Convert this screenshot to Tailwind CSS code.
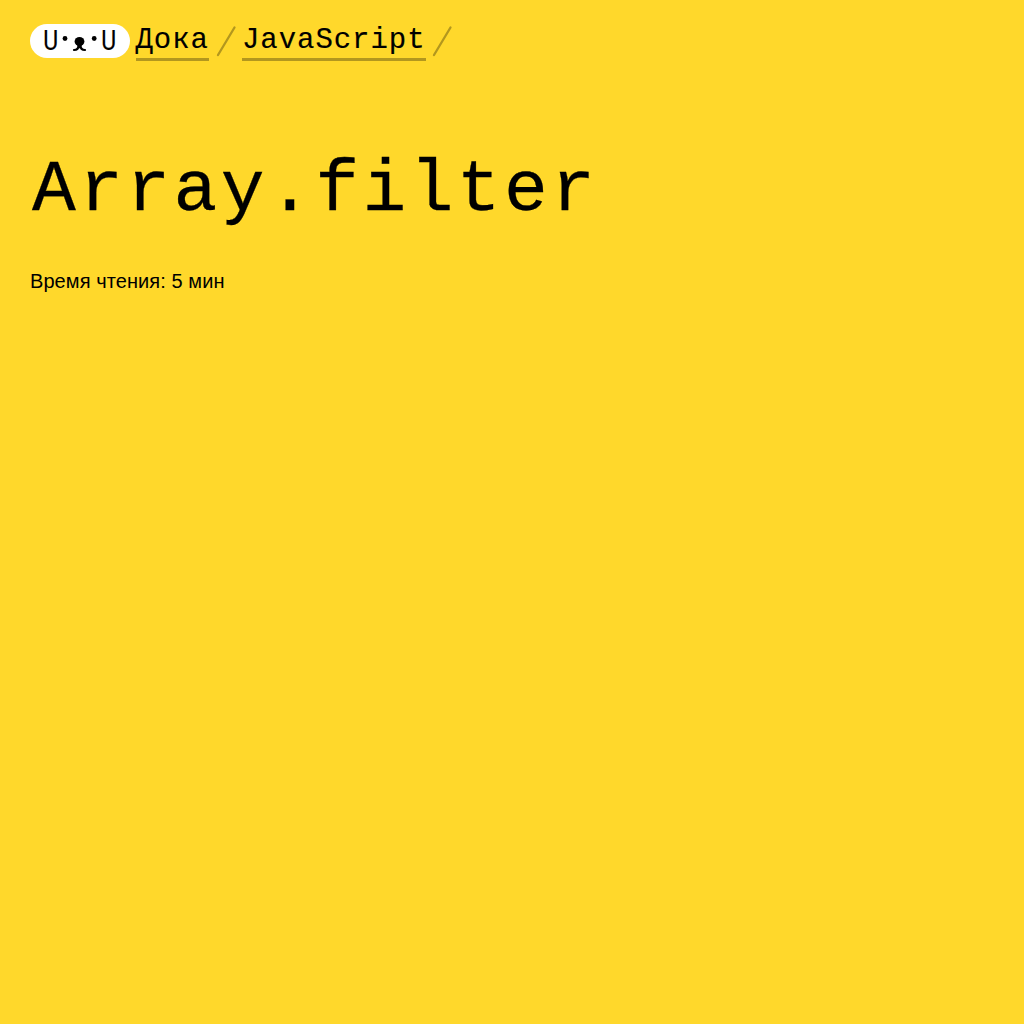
<!DOCTYPE html>
<html lang="ru">
<head>
<meta charset="utf-8">
<title>Array.filter</title>
<script src="https://cdn.jsdelivr.net/npm/@tailwindcss/browser@4"></script>
</head>
<body class="min-h-screen bg-[#ffd82b] text-black px-[30px] pt-6">
<header class="flex h-[38px] items-start font-['Liberation_Mono',monospace] text-[29px] leading-[34px]">
  <a class="mr-[5.5px] flex h-[34px] w-[100px] shrink-0 items-center justify-center rounded-full bg-white pr-[1.5px] font-['Roboto',sans-serif] text-[27px] leading-[34px]">
    <span class="w-[17px] scale-x-85 text-center [-webkit-text-stroke:0.2px_black]">U</span>
    <svg class="h-[34px] w-[41px]" viewBox="0 0 41 34"><circle cx="6" cy="14.500" r="2.400"/><circle cx="35.200" cy="14.500" r="2.400"/><ellipse cx="20.500" cy="17.500" rx="4.900" ry="4.500"/><path d="M18 19h5l-1 4-1.500 1.500L19 23z"/><path d="M19.500 21.500c0 3-1.500 4.500-4.500 4.500M21.500 21.500c0 3 1.500 4.500 4.500 4.500" fill="none" stroke="#000" stroke-width="2.200" stroke-linecap="round"/></svg>
    <span class="w-[17px] scale-x-85 text-center [-webkit-text-stroke:0.2px_black]">U</span>
  </a>
  <a class="h-[37px] w-[73.500px] border-b-3 border-[#b3971e] whitespace-nowrap tracking-[0.95px] [-webkit-text-stroke:0.15px_black]">Дока</a>
  <svg class="mx-2 mt-0.5 h-[31px] w-[17px] overflow-visible" viewBox="0 0 17 31"><path d="M1 29L17.500 1.500" stroke="#b3971e" stroke-width="2.300" stroke-linecap="round"/></svg>
  <a class="h-[37px] w-[183.500px] border-b-3 border-[#b3971e] whitespace-nowrap tracking-[0.95px] [-webkit-text-stroke:0.15px_black]">JavaScript</a>
  <svg class="mx-[7.5px] mt-0.5 h-[31px] w-[17px] overflow-visible" viewBox="0 0 17 31"><path d="M1 29L17.500 1.500" stroke="#b3971e" stroke-width="2.300" stroke-linecap="round"/></svg>
</header>
<main>
  <h1 class="mt-[82px] h-[94px] pl-[2px] font-['Liberation_Mono',monospace] text-[73px] leading-[94px] tracking-[3.4px] whitespace-nowrap [-webkit-text-stroke:0.3px_black]">Array.filter</h1>
  <p class="mt-[31px] font-['Liberation_Sans',sans-serif] text-xl leading-6 tracking-[0.08px]">Время чтения: 5 мин</p>
</main>
</body>
</html>
